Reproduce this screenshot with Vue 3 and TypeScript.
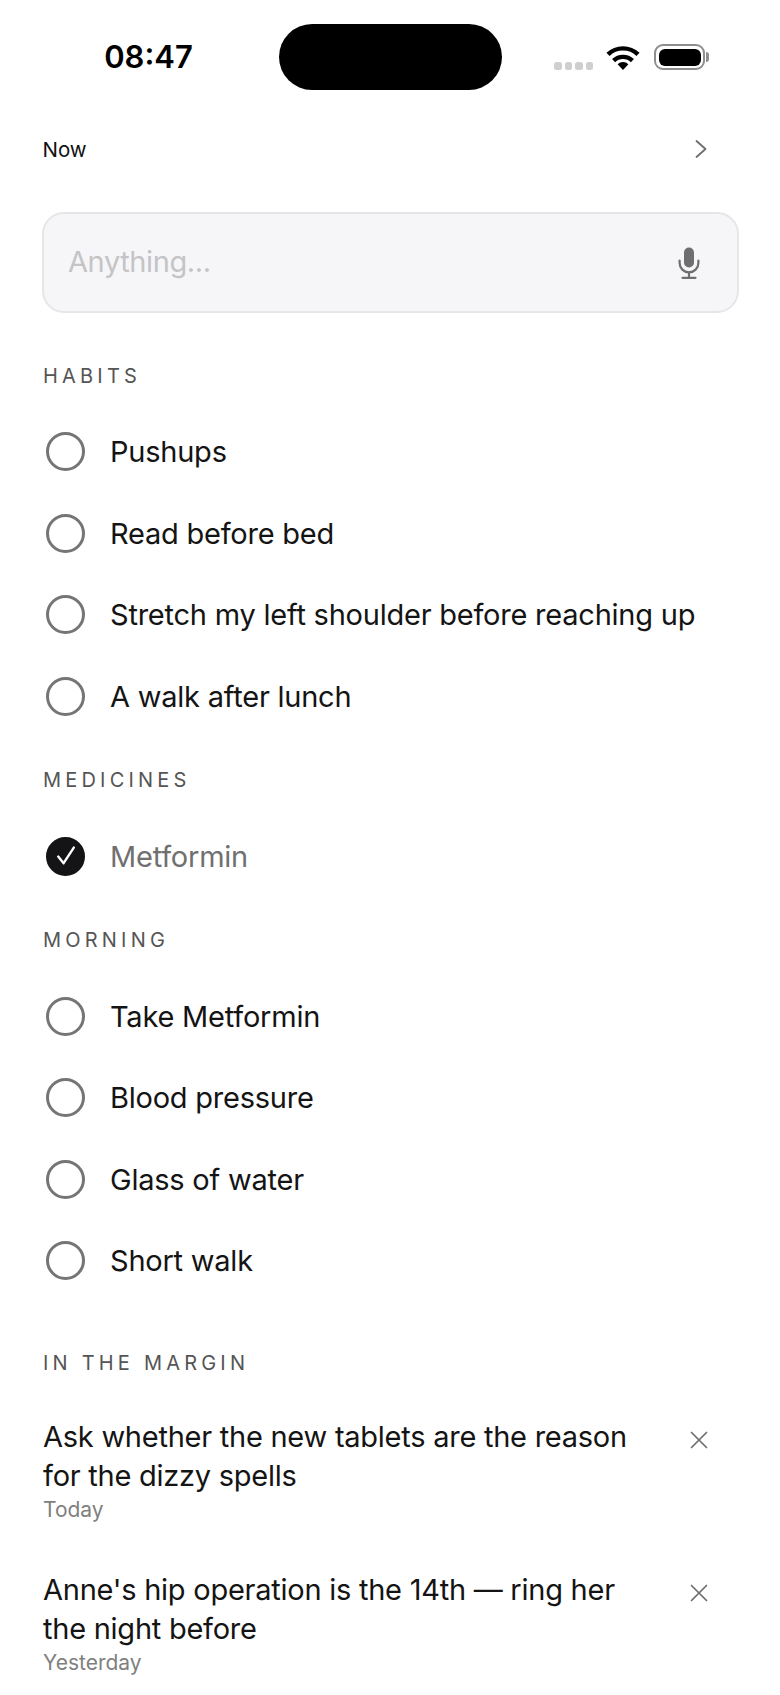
<script setup lang="ts">
interface Task { label: string; done?: boolean }
interface Section { title: string; tasks: Task[] }
interface Note { text: string; when: string }

const sections: Section[] = [
  { title: 'HABITS', tasks: [
    { label: 'Pushups' },
    { label: 'Read before bed' },
    { label: 'Stretch my left shoulder before reaching up' },
    { label: 'A walk after lunch' },
  ] },
  { title: 'MEDICINES', tasks: [{ label: 'Metformin', done: true }] },
  { title: 'MORNING', tasks: [
    { label: 'Take Metformin' },
    { label: 'Blood pressure' },
    { label: 'Glass of water' },
    { label: 'Short walk' },
  ] },
]

const notes: Note[] = [
  { text: 'Ask whether the new tablets are the reason for the dizzy spells', when: 'Today' },
  { text: "Anne's hip operation is the 14th — ring her the night before", when: 'Yesterday' },
]
</script>

<template>
  <div class="screen">
    <header class="status">
      <span class="time">08:47</span>
      <div class="island"></div>
      <div class="indicators">
        <div class="dots"><i></i><i></i><i></i><i></i></div>
        <svg class="wifi" viewBox="0 0 36 26" width="36" height="26">
          <path d="M18 26 12.6 20.2a8 8 0 0 1 10.8 0Z" fill="#000" />
          <path d="M8.6 16.6a13.6 13.6 0 0 1 18.8 0" fill="none" stroke="#000" stroke-width="4.4" />
          <path d="M3 10.4a21.6 21.6 0 0 1 30 0" fill="none" stroke="#000" stroke-width="4.4" />
        </svg>
        <div class="battery"><div class="charge"></div><div class="nub"></div></div>
      </div>
    </header>

    <div class="now">
      <span>Now</span>
      <svg viewBox="0 0 14 20" width="14" height="20">
        <path d="M2.5 2 11.5 10 2.5 18" fill="none" stroke="#6e6e6e" stroke-width="1.8" stroke-linecap="round" stroke-linejoin="round" />
      </svg>
    </div>

    <div class="field">
      <span class="placeholder">Anything...</span>
      <svg viewBox="0 0 22 32" width="22" height="32">
        <rect x="6" y="0.5" width="10" height="20" rx="5" fill="#6e6e6e" />
        <path d="M1.6 13.5v2.5a9.4 9.4 0 0 0 18.8 0v-2.5" fill="none" stroke="#6e6e6e" stroke-width="2.2" stroke-linecap="round" />
        <path d="M11 25.5v5M4.5 30.8h13" fill="none" stroke="#6e6e6e" stroke-width="2.2" stroke-linecap="round" />
      </svg>
    </div>

    <section v-for="section in sections" :key="section.title" class="section">
      <h2 class="label">{{ section.title }}</h2>
      <div v-for="task in section.tasks" :key="task.label" class="task" :class="{ done: task.done }">
        <span class="check">
          <svg v-if="task.done" viewBox="0 0 20 20" width="24" height="24">
            <path d="M3.5 10.5 8 16 16.5 3" fill="none" stroke="#fff" stroke-width="2" stroke-linecap="round" stroke-linejoin="round" />
          </svg>
        </span>
        <span>{{ task.label }}</span>
      </div>
    </section>

    <section class="margin">
      <h2 class="label">IN THE MARGIN</h2>
      <article v-for="note in notes" :key="note.when" class="note">
        <div class="note-body">
          <p>{{ note.text }}</p>
          <small>{{ note.when }}</small>
        </div>
        <svg viewBox="0 0 18 18" width="18" height="18">
          <path d="M1.5 1.5 16.5 16.5M16.5 1.5 1.5 16.5" fill="none" stroke="#6e6e6e" stroke-width="1.7" stroke-linecap="round" />
        </svg>
      </article>
    </section>
  </div>
</template>

<style>
html, body { margin: 0; background: #fff; }
</style>

<style scoped>
.screen {
  width: 780px;
  height: 1695px;
  overflow: hidden;
  box-sizing: border-box;
  padding: 0 39px 0 43px;
  background: #fff;
  color: #141414;
  font-family: Inter, "Liberation Sans", sans-serif;
}
.status {
  display: flex;
  align-items: flex-start;
  height: 129px;
  margin: 0 -39px 0 -43px;
}
.time {
  width: 279px;
  padding-top: 38px;
  text-align: center;
  padding-left: 18px;
  box-sizing: border-box;
  font-size: 31px;
  line-height: 38px;
  font-weight: 600;
  color: #000;
}
.island {
  width: 223px;
  height: 66px;
  margin-top: 24px;
  border-radius: 33px;
  background: #000;
}
.indicators {
  display: flex;
  align-items: flex-start;
  margin-left: 52px;
  padding-top: 44px;
}
.dots { display: flex; gap: 3px; margin-top: 18px; }
.dots i { width: 7.5px; height: 8px; border-radius: 2.5px; background: #cfcfcf; }
.wifi { margin-left: 12px; }
.battery {
  position: relative;
  width: 51px;
  height: 26px;
  margin-left: 13px;
  box-sizing: border-box;
  border: 2px solid #8e8e8e;
  border-radius: 9px;
  padding: 2.5px;
}
.charge { width: 100%; height: 100%; border-radius: 6px; background: #000; }
.nub {
  position: absolute;
  right: -5.5px;
  top: 6px;
  width: 3px;
  height: 10px;
  border-radius: 0 3px 3px 0;
  background: #8e8e8e;
}
.now {
  display: flex;
  align-items: center;
  justify-content: space-between;
  height: 40px;
  padding-right: 33px;
  margin-left: -0.5px;
  font-size: 20.5px;
  color: #111;
}
.field {
  display: flex;
  align-items: center;
  justify-content: space-between;
  box-sizing: border-box;
  width: 697px;
  height: 101px;
  margin: 43px 0 0 -1px;
  padding: 0 37px 0 24px;
  border: 2px solid #e6e6e8;
  border-radius: 22px;
  background: #f6f6f8;
}
.placeholder { margin-top: -3px; font-size: 29px; letter-spacing: -0.4px; color: #c4c4c7; }
.label {
  margin: 0 0 13.5px;
  height: 44px;
  line-height: 44px;
  font-size: 20px;
  font-weight: 400;
  letter-spacing: 4.2px;
  color: #555;
}
.section { padding-top: 20.7px; }
.field + .section { padding-top: 40.5px; }
.task {
  display: flex;
  align-items: center;
  gap: 25px;
  height: 81.6px;
  font-size: 29px;
  letter-spacing: -0.23px;
  padding-left: 3px;
}
.check {
  flex: none;
  display: flex;
  align-items: center;
  justify-content: center;
  box-sizing: border-box;
  width: 39px;
  height: 39px;
  border: 3px solid #757575;
  border-radius: 50%;
}
.done { color: #707070; }
.done .check { border-color: #141416; background: #141416; }
.margin { padding-top: 39px; }
.note {
  display: flex;
  align-items: flex-start;
  justify-content: space-between;
  height: 153.5px;
}
.margin .label { margin-bottom: 32px; }
.note-body { width: 600px; }
.note p { margin: 0; font-size: 29px; letter-spacing: -0.25px; line-height: 39px; }
.note small { display: block; margin-top: 1px; font-size: 21px; line-height: 28px; color: #808080; }
.note svg { margin: 14px 33px 0 0; }
</style>
